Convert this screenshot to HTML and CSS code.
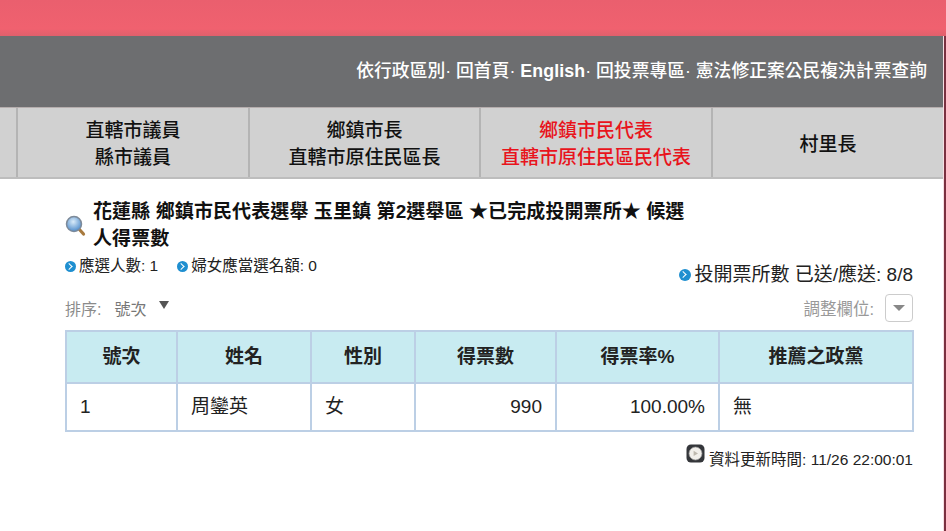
FILE: index.html
```html
<!DOCTYPE html>
<html lang="zh-Hant">
<head>
<meta charset="utf-8">
<title>候選人得票數</title>
<link rel="stylesheet" href="styles.css">
</head>
<body>
<div class="banner"></div>
<div class="page">
  <header class="topbar">
    <nav class="toplinks">依行政區別· 回首頁· <b>English</b>· 回投票專區· 憲法修正案公民複決計票查詢</nav>
  </header>
  <div class="tabs">
    <div class="tab tab-stub"></div>
    <div class="tab tab-a">直轄市議員<br>縣市議員</div>
    <div class="tab tab-b">鄉鎮市長<br>直轄市原住民區長</div>
    <div class="tab tab-c active">鄉鎮市民代表<br>直轄市原住民區民代表</div>
    <div class="tab tab-d">村里長</div>
  </div>
  <main class="content">
    <div class="title-row">
      <svg class="lens" width="21" height="22" viewBox="0 0 21 22">
        <defs><radialGradient id="g" cx="45%" cy="35%" r="65%"><stop offset="0" stop-color="#d9ebf9"/><stop offset="1" stop-color="#4f8ccb"/></radialGradient></defs>
        <line x1="14" y1="14" x2="18.5" y2="19" stroke="#a87a3e" stroke-width="3.2" stroke-linecap="round"/>
        <circle cx="9" cy="9" r="7.5" fill="url(#g)" stroke="#7d8a99" stroke-width="1.5"/>
      </svg>
      <h1 class="title">花蓮縣 鄉鎮市民代表選舉 玉里鎮 第2選舉區 ★已完成投開票所★ 候選人得票數</h1>
    </div>
    <div class="info-row">
      <div class="quota">
        <span class="q"><i class="dot"></i>應選人數: 1</span>
        <span class="q"><i class="dot"></i>婦女應當選名額: 0</span>
      </div>
      <div class="stations"><i class="dot dot-lg"></i>投開票所數 已送/應送: 8/8</div>
    </div>
    <div class="ctrl-row">
      <div class="sort">排序: <span class="sort-val">號次</span><span class="sort-arrow"></span></div>
      <div class="adjust">調整欄位:<span class="adjust-btn"><span class="adjust-arrow"></span></span></div>
    </div>
    <table class="votes">
      <thead>
        <tr><th class="c1">號次</th><th class="c2">姓名</th><th class="c3">性別</th><th class="c4">得票數</th><th class="c5">得票率%</th><th class="c6">推薦之政黨</th></tr>
      </thead>
      <tbody>
        <tr><td>1</td><td>周鑾英</td><td>女</td><td class="num">990</td><td class="num">100.00%</td><td>無</td></tr>
      </tbody>
    </table>
    <div class="updated">
      <svg class="clock" width="19" height="19" viewBox="0 0 19 19">
        <rect x="0.5" y="0.5" width="18" height="18" rx="4.5" fill="#34363a"/>
        <circle cx="9.5" cy="9.5" r="6.5" fill="#f1efeb" stroke="#9a9a9a" stroke-width="0.7"/>
        <path d="M7.6 6.8 L12 9.5 L7.6 12 Z" fill="#bdb8ae"/>
      </svg>
      <span>資料更新時間: 11/26 22:00:01</span>
    </div>
  </main>
</div>
</body>
</html>
```

FILE: styles.css
```css
* { box-sizing: border-box; }
html, body { margin: 0; padding: 0; }
body {
  background: #7a3040;
  font-family: "Liberation Sans", "Noto Sans CJK TC", sans-serif;
  color: #111;
  height: 531px;
  overflow: hidden;
}
.banner { height: 36px; background: linear-gradient(#ea5f6e, #f0616f 80%, #e0606c); }
.page { width: 944px; height: 495px; background: #fff; border-right: 1px solid #f6dfe3; }
.topbar {
  height: 71px;
  background: #6d6e70;
  display: flex;
  align-items: center;
  justify-content: flex-end;
  padding: 0 16px 1px 0;
}
.toplinks { color: #fff; font-size: 17.8px; line-height: 24px; font-weight: 500; }
.toplinks b { font-weight: 700; letter-spacing: 0.1px; }
.tabs {
  display: flex;
  height: 72px;
  background: #d1d1d1;
  border-top: 1px solid #b5adad;
  border-bottom: 2px solid #bdbdbd;
}
.tab {
  display: flex;
  align-items: center;
  justify-content: center;
  text-align: center;
  padding-top: 3px;
  font-size: 19px;
  font-weight: 500;
  line-height: 27px;
  color: #111;
  border-right: 2px solid #b4b4b4;
}
.tab-stub { width: 18px; }
.tab-a { width: 232px; }
.tab-b { width: 231px; }
.tab-c { width: 232px; }
.tab-d { flex: 1; border-right: 0; }
.tab.active { color: #e8141c; }
.content { padding: 19px 30px 0 65px; }
.title-row { display: flex; align-items: center; width: 630px; }
.lens { flex: none; margin: 0 7px 0 0; position: relative; top: 1px; }
.title { margin: 0; font-size: 19px; font-weight: 700; line-height: 27px; letter-spacing: 0.1px; color: #111; width: 596px; }
.info-row { display: flex; justify-content: space-between; align-items: flex-start; margin-top: 4px; }
.quota { display: flex; gap: 19px; font-size: 15.5px; line-height: 20px; color: #222; }
.q { display: flex; align-items: center; }
.dot {
  display: inline-block;
  width: 11px;
  height: 11px;
  margin-right: 3px;
  border-radius: 50%;
  background: #1f8fd0;
  position: relative;
}
.dot::after {
  content: "";
  position: absolute;
  left: 3px;
  top: 3px;
  width: 4px;
  height: 4px;
  border-top: 1.5px solid #fff;
  border-right: 1.5px solid #fff;
  transform: rotate(45deg) translate(-1px, 1px);
}
.stations { display: flex; align-items: center; font-size: 19px; line-height: 24px; color: #222; margin: 7px 0 0 0; }
.dot-lg { width: 12px; height: 12px; margin-right: 3px; }
.ctrl-row { display: flex; justify-content: space-between; align-items: center; margin-top: 3px; height: 36px; }
.sort { font-size: 16px; color: #8b8b8b; display: flex; align-items: center; }
.sort-val { margin-left: 13px; color: #777; }
.sort-arrow {
  width: 0; height: 0; margin: -6px 0 0 13px;
  border-left: 5px solid transparent;
  border-right: 5px solid transparent;
  border-top: 8px solid #555;
}
.adjust { font-size: 16.5px; color: #999; display: flex; align-items: center; }
.adjust-btn {
  width: 28px; height: 28px; margin-left: 11px;
  border: 1px solid #ccc; border-radius: 4px;
  display: flex; align-items: center; justify-content: center;
}
.adjust-arrow {
  width: 0; height: 0;
  border-left: 6px solid transparent;
  border-right: 6px solid transparent;
  border-top: 6px solid #888;
}
.votes { border-collapse: collapse; table-layout: fixed; width: 849px; margin-top: 4px; }
.votes th, .votes td { border: 2px solid #bccfe5; font-size: 19px; line-height: 24px; padding: 0 13px; color: #222; }
.votes th { background: #c8ebf1; font-weight: 700; height: 52px; text-align: center; }
.votes td { height: 48px; }
.votes td.num { text-align: right; }
.c1 { width: 111px; }
.c2 { width: 134px; }
.c3 { width: 104px; }
.c4 { width: 141px; }
.c5 { width: 163px; }
.updated { display: flex; justify-content: flex-end; align-items: flex-end; margin-top: 12px; font-size: 15.5px; color: #222; }
.clock { margin: 0 4px 6px 0; }
```
